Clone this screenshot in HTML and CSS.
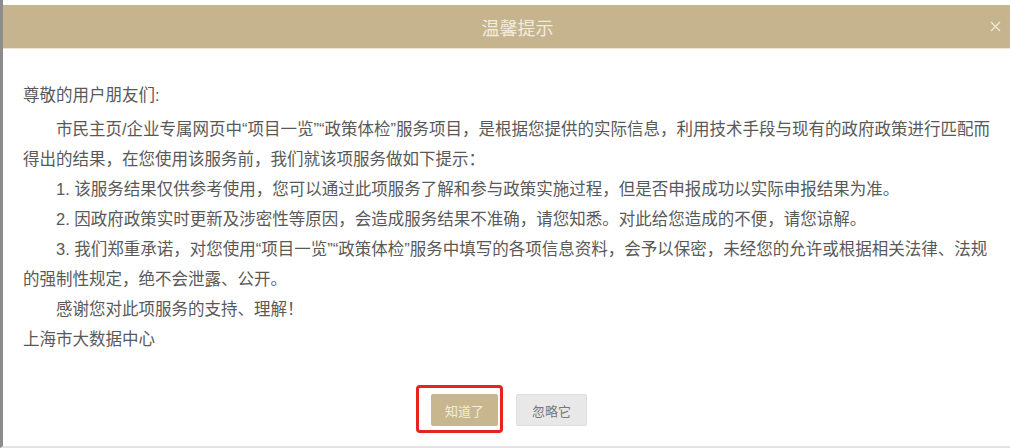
FILE: index.html
```html
<!DOCTYPE html>
<html lang="zh-CN">
<head>
<meta charset="utf-8">
<title>温馨提示</title>
<link rel="stylesheet" href="styles.css">
</head>
<body>
<div class="page">
  <div class="dialog">
    <div class="header">
      <span class="spacer"></span>
      <span class="title">温馨提示</span>
      <span class="close">
        <svg width="11" height="11" viewBox="0 0 11 11"><path d="M1 1L10 10M10 1L1 10" stroke="#f1e9d4" stroke-width="1.4" fill="none"/></svg>
      </span>
    </div>
    <div class="content">
      <p class="greet">尊敬的用户朋友们:</p>
      <p class="indent">市民主页/企业专属网页中“项目一览”“政策体检”服务项目，是根据您提供的实际信息，利用技术手段与现有的政府政策进行匹配而得出的结果，在您使用该服务前，我们就该项服务做如下提示：</p>
      <p class="indent">1. 该服务结果仅供参考使用，您可以通过此项服务了解和参与政策实施过程，但是否申报成功以实际申报结果为准。</p>
      <p class="indent">2. 因政府政策实时更新及涉密性等原因，会造成服务结果不准确，请您知悉。对此给您造成的不便，请您谅解。</p>
      <p class="indent">3. 我们郑重承诺，对您使用“项目一览”“政策体检”服务中填写的各项信息资料，会予以保密，未经您的允许或根据相关法律、法规的强制性规定，绝不会泄露、公开。</p>
      <p class="indent">感谢您对此项服务的支持、理解！</p>
      <p>上海市大数据中心</p>
    </div>
    <div class="actions">
      <span class="marked"><button class="btn btn-primary">知道了</button></span>
      <button class="btn btn-default">忽略它</button>
    </div>
  </div>
</div>
</body>
</html>
```
FILE: styles.css
```css
html, body {
  margin: 0;
  padding: 0;
  background: #ffffff;
}
body {
  font-family: "Liberation Sans", "Noto Sans CJK SC", sans-serif;
  width: 1010px;
  height: 448px;
  overflow: hidden;
}
.page {
  box-sizing: border-box;
  height: 448px;
  border-left: 3px solid #8c8c8c;
  border-bottom: 2px solid #e2e2e2;
  padding-top: 5px;
}
.header {
  height: 43px;
  background: #c5b48d;
  border-bottom: 1px solid #efe6cc;
  display: grid;
  grid-template-columns: 1fr auto 1fr;
  align-items: center;
}
.title {
  font-size: 18px;
  color: #f2ecde;
  padding-left: 22px;
}
.close {
  justify-self: end;
  margin-right: 9px;
  display: flex;
  align-items: center;
}
.content {
  padding: 31px 12px 0 20px;
  font-size: 16.5px;
  line-height: 30px;
  color: #595959;
}
.content p {
  margin: 0;
}
.content .greet {
  margin-bottom: 4px;
}
.content .indent {
  text-indent: 2em;
}
.actions {
  margin-top: 40px;
  display: flex;
  justify-content: center;
  gap: 18px;
  padding-left: 5px;
}
.marked {
  position: relative;
  display: inline-flex;
}
.marked::after {
  content: "";
  position: absolute;
  left: -15px;
  top: -9px;
  width: 87px;
  height: 48px;
  box-sizing: border-box;
  border: 3px solid #e5231f;
  border-radius: 4px;
}
.btn {
  height: 32px;
  font-family: "Liberation Sans", "Noto Sans CJK SC", sans-serif;
  font-size: 13px;
  border-radius: 2px;
  padding: 0;
  cursor: pointer;
}
.btn-primary {
  width: 67px;
  background: #c8b78e;
  border: 1px solid #c8b78e;
  color: #f4eddc;
}
.btn-default {
  width: 71px;
  background: #e9e8e8;
  border: 1px solid #dedede;
  color: #777777;
}
```
